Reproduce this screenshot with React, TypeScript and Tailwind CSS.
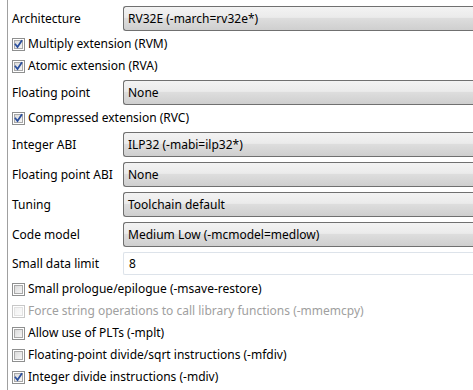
import React from 'react';

const font = { fontFamily: '"Noto Sans", "Open Sans", sans-serif' };

function CheckBox({ checked, disabled }: { checked?: boolean; disabled?: boolean }) {
  const outer = disabled ? '#c8c8c8' : '#8e8f8f';
  const inner = disabled ? '#e2e2e2' : '#a9a9a9';
  return (
    <svg width="13" height="13" viewBox="0 0 13 13" className="shrink-0">
      <defs>
        <linearGradient id={disabled ? 'cbd' : 'cbg'} x1="0" y1="0" x2="1" y2="1">
          <stop offset="0" stopColor={disabled ? '#f0f0f0' : '#d9d9d9'} />
          <stop offset="1" stopColor={disabled ? '#fbfbfb' : '#f7f7f7'} />
        </linearGradient>
      </defs>
      <rect x="0.5" y="0.5" width="12" height="12" fill="#fff" stroke={outer} />
      <rect x="2.5" y="2.5" width="8" height="8" fill={`url(#${disabled ? 'cbd' : 'cbg'})`} stroke={inner} />
      {checked && (
        <path d="M3.5 6.5 L5.5 9 L9.5 3" fill="none" stroke="#2a4f9e" strokeWidth="1.8" strokeLinecap="square" />
      )}
    </svg>
  );
}

function Combo({ label, value, className = '' }: { label: string; value: string; className?: string }) {
  return (
    <div className={`flex items-center h-[25px] ${className}`}>
      <div className="w-[111px] shrink-0 text-black">{label}</div>
      <div className="flex-1 h-[25px] flex items-center pl-[4px] rounded-l-[3px] border border-r-0 border-[#707070] bg-[linear-gradient(to_bottom,#f3f3f3_0%,#ebebeb_45%,#dddddd_50%,#cfcfcf_100%)] text-black">
        {value}
      </div>
    </div>
  );
}

function Check({ label, checked, disabled, className = '' }: { label: string; checked?: boolean; disabled?: boolean; className?: string }) {
  return (
    <div className={`flex items-center h-[22px] gap-[3px] ${className}`}>
      <CheckBox checked={checked} disabled={disabled} />
      <span className={disabled ? 'text-[#a0a0a0]' : 'text-black'}>{label}</span>
    </div>
  );
}

export default function App() {
  return (
    <div className="w-[473px] h-[390px] bg-white overflow-hidden text-[12px] leading-none" style={font}>
      <div className="ml-[7px] h-full border-l border-[#a0a0a0] pl-[4px] pt-[6px] flex flex-col">
        <Combo label="Architecture" value="RV32E (-march=rv32e*)" />
        <Check label="Multiply extension (RVM)" checked className="mt-[2px]" />
        <Check label="Atomic extension (RVA)" checked />
        <Combo label="Floating point" value="None" className="mt-[3px]" />
        <Check label="Compressed extension (RVC)" checked className="mt-[2px]" />
        <Combo label="Integer ABI" value="ILP32 (-mabi=ilp32*)" className="mt-[3px]" />
        <Combo label="Floating point ABI" value="None" className="mt-[5px]" />
        <Combo label="Tuning" value="Toolchain default" className="mt-[5px]" />
        <Combo label="Code model" value="Medium Low (-mcmodel=medlow)" className="mt-[5px]" />
        <div className="flex items-center h-[23px] mt-[5px]">
          <div className="w-[111px] shrink-0 text-black">Small data limit</div>
          <div className="flex-1 h-[23px] flex items-center pl-[5px] rounded-l-[2px] border border-r-0 border-[#dde3ea] text-black">8</div>
        </div>
        <Check label="Small prologue/epilogue (-msave-restore)" className="mt-[3px]" />
        <Check label="Force string operations to call library functions (-mmemcpy)" disabled />
        <Check label="Allow use of PLTs (-mplt)" />
        <Check label="Floating-point divide/sqrt instructions (-mfdiv)" />
        <Check label="Integer divide instructions (-mdiv)" checked />
      </div>
    </div>
  );
}
